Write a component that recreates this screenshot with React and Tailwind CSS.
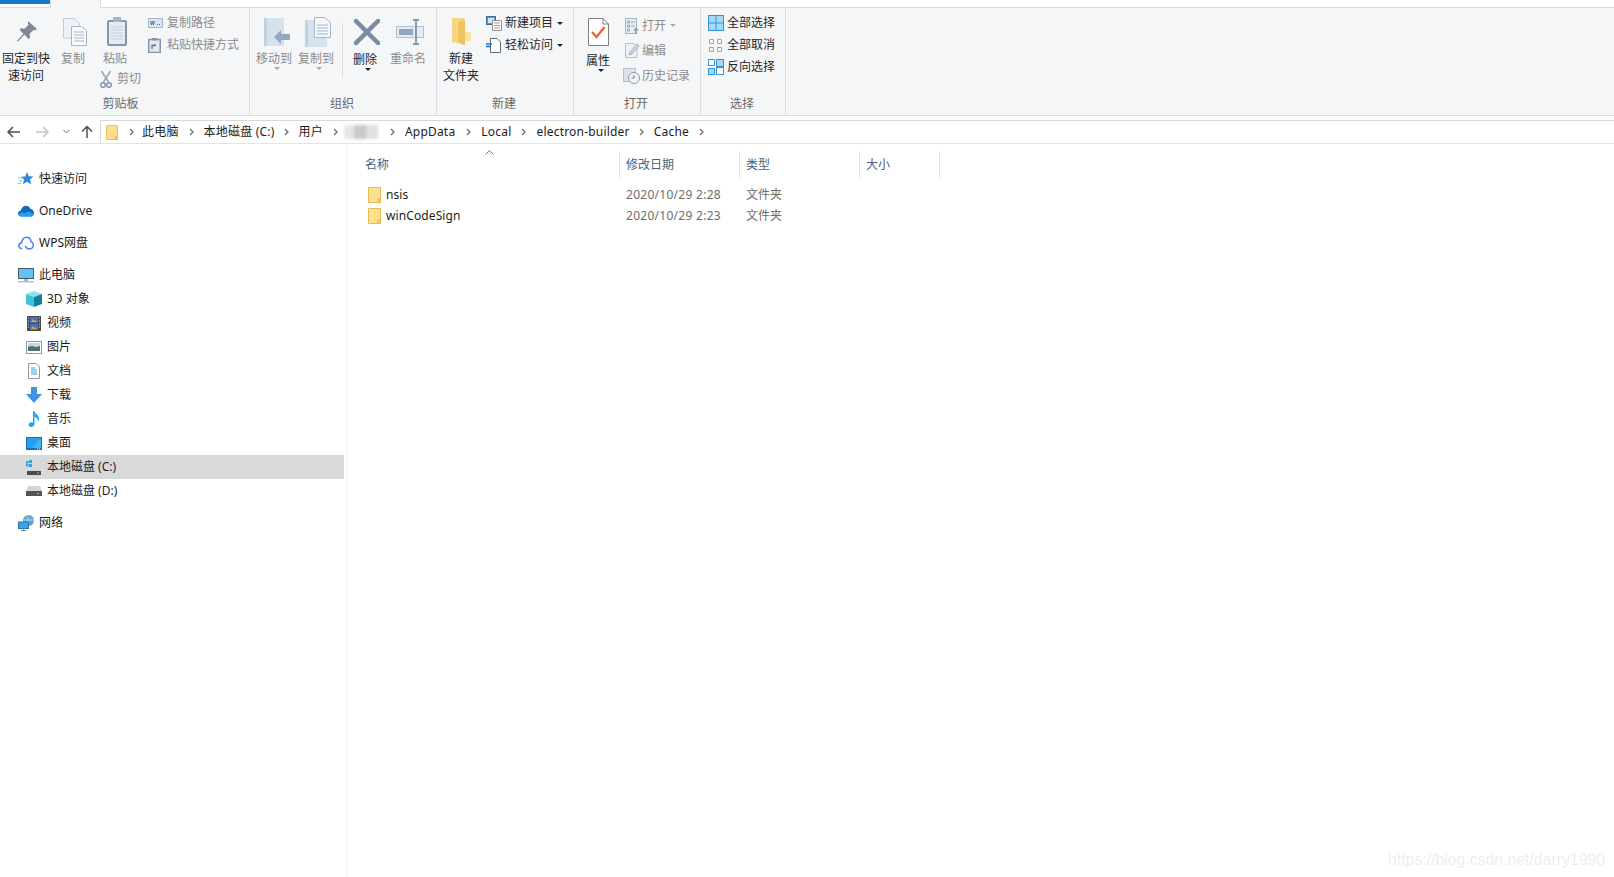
import { useState } from "react";

const navRows = [
  { label: "快速访问", icon: "star", top: true },
  { label: "OneDrive", icon: "cloud", top: true },
  { label: "WPS网盘", icon: "wps", top: true },
  { label: "此电脑", icon: "pc", top: true },
  { label: "3D 对象", icon: "cube" },
  { label: "视频", icon: "film" },
  { label: "图片", icon: "picture" },
  { label: "文档", icon: "doc" },
  { label: "下载", icon: "download" },
  { label: "音乐", icon: "music" },
  { label: "桌面", icon: "desktop" },
  { label: "本地磁盘 (C:)", icon: "diskC", selected: true },
  { label: "本地磁盘 (D:)", icon: "diskD" },
  { label: "网络", icon: "network", top: true },
];

const files = [
  { name: "nsis", date: "2020/10/29 2:28", type: "文件夹" },
  { name: "winCodeSign", date: "2020/10/29 2:23", type: "文件夹" },
];

function Folder({ w = 13, h = 16 }) {
  return (
    <svg width={w} height={h} viewBox="0 0 13 16">
      <path d="M0.5 0.5H12.5V15.5H0.5Z" fill="#fbe08f" stroke="#e4bb52" />
      <path d="M10 12V15.5H12.5V12Z" fill="#f1cc6a" stroke="#e4bb52" />
    </svg>
  );
}

function NavIcon({ name }) {
  switch (name) {
    case "star":
      return (
        <svg width="16" height="16" viewBox="0 0 16 16">
          <path d="M9 1l1.800 4.200 4.700.4-3.500 3 1 4.600L9 10.800 5 13.200l1-4.600-3-2.800 4.300-.2z" fill="#2b87d8" />
          <path d="M0 7h4M1 10h3M0 12.500h3" stroke="#7cc0f0" />
        </svg>
      );
    case "cloud":
      return (
        <svg width="16" height="12" viewBox="0 0 16 12">
          <path d="M3.500 11.500C1.200 11.500 0 10 0 8.500 0 6.800 1.300 5.600 2.800 5.500 3.500 2.500 5.800.8 8 .8c2 0 3.600 1.200 4.300 3C14.500 4 16 6 16 8c0 2-1.500 3.500-3.300 3.500z" fill="#0f6cbd" />
          <path d="M0.500 9.800C1 11 2 11.500 3.500 11.500h9.300c1.500 0 2.600-1 3-2.200C13 6.500 10 6 7 8 4.500 7 2 7.500.5 9.800z" fill="#2a9be8" />
        </svg>
      );
    case "wps":
      return (
        <svg width="16" height="14" viewBox="0 0 16 14" fill="none">
          <path d="M4 12.800C2 12.800.8 11.300.8 9.700.8 8 2.200 6.800 3.600 6.700 4.200 3.400 6.200 1.300 8.500 1.300c2.500 0 4.300 2 4.600 4.500 1.400.3 2.200 1.800 2.200 3.300 0 2-1.400 3.700-3.300 3.700H9.500L7 10" stroke="#4a86e8" strokeWidth="1.500" />
        </svg>
      );
    case "pc":
      return (
        <svg width="16" height="15" viewBox="0 0 16 15">
          <rect x="0" y="0" width="16" height="11" fill="#4a5a6a" />
          <rect x="1" y="1" width="14" height="9" fill="#62c3f5" />
          <rect x="6" y="11" width="4" height="2" fill="#a9b6c2" />
          <rect x="0" y="13" width="16" height="1.500" fill="#b7c2cc" />
        </svg>
      );
    case "cube":
      return (
        <svg width="16" height="16" viewBox="0 0 16 16">
          <path d="M8 0l8 3-8 3-8-3z" fill="#8ce2ee" />
          <path d="M0 3l8 3v10l-8-3z" fill="#3fc3da" />
          <path d="M16 3l-8 3v10l8-3z" fill="#0f7f9f" />
        </svg>
      );
    case "film":
      return (
        <svg className="ml-[1px]" width="14" height="15" viewBox="0 0 14 15">
          <rect width="14" height="15" fill="#4b4b4b" />
          <rect x="3" y="1" width="8" height="6" fill="#4a6fb5" />
          <path d="M4 6l2-3 1.500 2 1-1 1.500 2z" fill="#d9a441" />
          <rect x="3" y="8" width="8" height="6" fill="#4a6fb5" />
          <path d="M4 13l2-3 1.500 2 1-1 1.500 2z" fill="#d9a441" />
          <path d="M1 2h1M1 5h1M1 8h1M1 11h1M12 2h1M12 5h1M12 8h1M12 11h1" stroke="#ddd" />
        </svg>
      );
    case "picture":
      return (
        <svg width="16" height="13" viewBox="0 0 16 13">
          <rect x=".5" y=".5" width="15" height="12" fill="#fff" stroke="#8f9aa5" />
          <rect x="2" y="2" width="12" height="4" fill="#bfd9e8" />
          <path d="M2 6l4-1 4 1 4-1v5H2z" fill="#4e6f6b" />
        </svg>
      );
    case "doc":
      return (
        <svg className="ml-[2px]" width="12" height="16" viewBox="0 0 12 16">
          <path d="M.5.500H8l3.500 3.500v11.500H.5z" fill="#fff" stroke="#8f9aa5" />
          <path d="M3 5h4M3 7h6M3 9h6M3 11h6" stroke="#3aa3e3" />
        </svg>
      );
    case "download":
      return (
        <svg width="16" height="16" viewBox="0 0 16 16">
          <path d="M5 0h6v7h5l-8 9-8-9h5z" fill="#3f93e0" />
        </svg>
      );
    case "music":
      return (
        <svg className="ml-[2px]" width="12" height="16" viewBox="0 0 12 16">
          <path d="M5 0h1.500c.3 3 4.500 3.500 4.500 8 0 1-.3 2-.8 2.800.2-2.800-2.200-4.500-3.700-5V13c0 1.800-1.500 3-3.500 3C1.500 16 .5 15 .5 13.800.5 12.300 2 11.300 3.500 11.300c.6 0 1 .1 1.500.3z" fill="#1ea7f2" />
        </svg>
      );
    case "desktop":
      return (
        <svg width="16" height="13" viewBox="0 0 16 13">
          <rect width="16" height="13" fill="#1a6fb5" />
          <rect x="1" y="1" width="14" height="10" fill="#1fa2ee" />
          <path d="M8 9l5-7h2v9H6z" fill="#3bb4f5" />
          <path d="M11 12h1M13 12h1" stroke="#fff" />
        </svg>
      );
    case "diskC":
      return (
        <svg width="16" height="15" viewBox="0 0 16 15">
          <path d="M0 1h2.500v2.500H0zM3 0h3v3H3zM0 4h2.500v2.500H0zM3 4h3v3H3z" fill="#22a7e8" />
          <path d="M2 9h12l2 2H0z" fill="#d7d7d7" />
          <rect x="1" y="11" width="14" height="4" fill="#4a4a4a" />
          <rect x="11" y="12.500" width="2" height="1" fill="#6fdc6f" />
        </svg>
      );
    case "diskD":
      return (
        <svg width="16" height="10" viewBox="0 0 16 10">
          <path d="M2 0h12l2 5H0z" fill="#d2d6d6" />
          <rect x="0" y="5" width="16" height="5" fill="#555" />
          <rect x="11" y="7" width="2" height="1" fill="#6fdc6f" />
        </svg>
      );
    default:
      return (
        <svg width="16" height="16" viewBox="0 0 16 16">
          <circle cx="10.500" cy="5.500" r="5.500" fill="#5ea6d8" />
          <path d="M9 1c2 2 2 7 0 9M6 5h10" stroke="#b6d9ef" fill="none" />
          <rect x="0" y="6.500" width="11" height="7.500" fill="#2b78b5" />
          <rect x="1" y="7.500" width="9" height="5.500" fill="#39a5e8" />
          <path d="M3 15.500h5M5.500 14v1.500" stroke="#7c8b99" />
        </svg>
      );
  }
}

function Caret({ dark }) {
  return (
    <span
      className={`block h-0 w-0 border-x-[3.5px] border-t-[3.5px] border-x-transparent ${
        dark ? "border-t-[#222]" : "border-t-[#a8a8a8]"
      }`}
    />
  );
}

function BigButton({ icon, lines, width, disabled, caret, darkCaret, iconShift = "", labelShift = "" }) {
  return (
    <div className={`flex shrink-0 flex-col items-center pt-[5px] ${width}`}>
      <div className={`flex h-[37px] items-center justify-center ${iconShift}`}>{icon}</div>
      {lines.map((line) => (
        <span key={line} className={`h-[17px] whitespace-nowrap leading-[17px] ${labelShift} ${disabled ? "text-[#8c8c8c]" : "text-[#262626]"}`}>
          {line}
        </span>
      ))}
      {caret && (
        <div className="ml-[5px]">
          <Caret dark={darkCaret} />
        </div>
      )}
    </div>
  );
}

function SmallRow({ icon, label, disabled, caret, height = "h-[22px]", iconBox = "w-[19px]" }) {
  return (
    <div className={`flex items-center whitespace-nowrap ${height}`}>
      <span className={`flex shrink-0 items-center justify-start ${iconBox}`}>{icon}</span>
      <span className={disabled ? "text-[#8c8c8c]" : "text-[#262626]"}>{label}</span>
      {caret && (
        <span className="ml-[4px]">
          <Caret dark={caret === "dark"} />
        </span>
      )}
    </div>
  );
}

function RibbonGroup({ label, width, labelPad = "pr-[2px]", children }) {
  return (
    <div className={`flex h-full shrink-0 flex-col border-r border-[#dfe0e1] ${width}`}>
      <div className="flex min-h-0 flex-1">{children}</div>
      <div className={`flex h-[24px] items-center justify-center pt-[2px] text-[#6b6b6b] ${labelPad}`}>{label}</div>
    </div>
  );
}

function Crumb({ label }) {
  return <span className="whitespace-nowrap tracking-[0.2px] text-[#1c1c1c]">{label}</span>;
}

function Sep({ className }) {
  return (
    <svg className={`shrink-0 ${className}`} width="5" height="8" viewBox="0 0 5 8" fill="none">
      <path d="M1 1l3 3-3 3" stroke="#6e6e6e" strokeWidth="1.300" />
    </svg>
  );
}

function Ribbon() {
  return (
    <div className="flex h-[108px] border-b border-[#dadbdc] bg-[#f5f6f7] pt-0">
      <RibbonGroup label="剪贴板" width="w-[250px]" labelPad="pr-[8px]">
        <BigButton
          width="w-[52px]"
          lines={["固定到快", "速访问"]}
          icon={
            <svg width="21" height="22" viewBox="0 0 21 22">
              <path d="M12 0l9 8-2 1.500-1.500-.5-4 4 .5 3.500-1.500 1.500-4-4.500-6.500 7L1 19.800l6.500-7-4-4 1.500-1.500 3.500.5 4-4-.500-1.500z" fill="#7e8896" />
            </svg>
          }
        />
        <BigButton
          width="w-[42px]"
          disabled
          lines={["复制"]}
          iconShift="ml-[4px]"
          icon={
            <svg width="24" height="28" viewBox="0 0 24 28" fill="none">
              <path d="M.5.500h11l5 5V20H.5z" fill="#eef2f7" stroke="#bccbdc" />
              <path d="M8.500 8.500h10l5 4v15h-15z" fill="#f7f9fb" stroke="#a5b6ca" />
              <path d="M11 14h10M11 17h10M11 20h10M11 23h10" stroke="#a5b6ca" />
            </svg>
          }
        />
        <div className="flex w-[50px] shrink-0 flex-col">
          <BigButton
            width="w-[42px]"
            disabled
            lines={["粘贴"]}
            iconShift="ml-[4px]"
            icon={
              <svg width="20" height="29" viewBox="0 0 20 29" fill="none">
                <rect x="1" y="4" width="18" height="24" rx="1" fill="#e6ebf2" stroke="#8595ab" strokeWidth="2" />
                <rect x="6" y="0" width="8" height="5" fill="#a5b2c4" />
                <path d="M4 10h12M4 13h12M4 16h12M4 19h12M4 22h12" stroke="#c4cfdd" />
              </svg>
            }
          />
          <div className="mt-[3px] ml-[6px] flex h-[18px] items-center whitespace-nowrap text-[#8c8c8c]">
            <svg className="mr-[5px]" width="12" height="17" viewBox="0 0 12 17" fill="none">
              <path d="M1.500 0l7 11M10.500 0l-7 11" stroke="#9aa3ad" strokeWidth="1.500" />
              <circle cx="3" cy="14" r="2.300" stroke="#7e94b0" strokeWidth="1.500" />
              <circle cx="9" cy="14" r="2.300" stroke="#7e94b0" strokeWidth="1.500" />
            </svg>
            剪切
          </div>
        </div>
        <div className="pl-[4px] pt-[4px]">
          <SmallRow
            disabled
            label="复制路径"
            icon={
              <svg width="15" height="10" viewBox="0 0 15 10">
                <rect x=".5" y=".5" width="14" height="9" fill="#dbe5f1" stroke="#a8b8cb" />
                <path d="M2.500 3l1 4 1-4 1 4 1-4M9 6.500h1M11 6.500h1" stroke="#5e7188" fill="none" />
              </svg>
            }
          />
          <SmallRow
            disabled
            label="粘贴快捷方式"
            icon={
              <svg width="13" height="15" viewBox="0 0 13 15">
                <rect x=".75" y="1.500" width="11.500" height="13" fill="#e4e9f0" stroke="#8595ab" strokeWidth="1.500" />
                <rect x="4" y="0" width="5" height="2.500" fill="#8595ab" />
                <path d="M4 11V7.500h3.500M4.500 7.500L8 7" stroke="#5e7188" fill="none" strokeWidth="1.300" />
              </svg>
            }
          />
        </div>
      </RibbonGroup>

      <RibbonGroup label="组织" width="w-[187px]">
        <div className="w-[3px] shrink-0" />
        <BigButton
          width="w-[42px]"
          disabled
          caret
          lines={["移动到"]}
          iconShift="ml-[6px]"
          icon={
            <svg width="26" height="28" viewBox="0 0 26 28">
              <path d="M0 0h20v28H0z" fill="#d6e1ee" />
              <path d="M0 0h3v28H0z" fill="#c2d0e0" />
              <path d="M10 19l7-7v4h9v6h-9v4z" fill="#93a7be" />
            </svg>
          }
        />
        <BigButton
          width="w-[42px]"
          disabled
          caret
          lines={["复制到"]}
          iconShift="ml-[3px]"
          icon={
            <svg width="26" height="30" viewBox="0 0 26 30" fill="none">
              <path d="M0 3h22v27H0z" fill="#d6e1ee" />
              <path d="M0 3h3v27H0z" fill="#c2d0e0" />
              <path d="M9.500.500h10l6 5v15h-16z" fill="#f5f8fb" stroke="#a5b6ca" />
              <path d="M12 8h11M12 11h11M12 14h11M12 17h11" stroke="#a5b6ca" />
            </svg>
          }
        />
        <div className="mt-[15px] ml-[5px] h-[55px] w-px shrink-0 bg-[#dfe0e1]" />
        <BigButton
          width="w-[44px]"
          caret
          darkCaret
          lines={["删除"]}
          iconShift="ml-[4px]"
          labelShift="mt-[1px]"
          icon={
            <svg width="26" height="26" viewBox="0 0 26 26">
              <path d="M2 2l22 22M24 2L2 24" stroke="#7b8ba6" strokeWidth="4.500" strokeLinecap="square" />
            </svg>
          }
        />
        <BigButton
          width="w-[42px]"
          disabled
          lines={["重命名"]}
          iconShift="ml-[4px]"
          icon={
            <svg width="28" height="26" viewBox="0 0 28 26" fill="none">
              <rect x=".5" y="7.500" width="27" height="11" fill="#e3eaf3" stroke="#b3c2d3" />
              <rect x="3" y="10" width="14" height="6" fill="#93a7be" />
              <path d="M17 1h6M20 1v24M17 25h6" stroke="#8a99ab" strokeWidth="2" />
            </svg>
          }
        />
      </RibbonGroup>

      <RibbonGroup label="新建" width="w-[137px]">
        <BigButton
          width="w-[48px]"
          lines={["新建", "文件夹"]}
          icon={
            <svg width="19" height="27" viewBox="0 0 19 27">
              <path d="M0 0h12l1 2v25L0 24z" fill="#f6d67f" />
              <path d="M6 4l7-2v25l-7-3z" fill="#efc45c" />
              <path d="M13 14h6v9h-6z" fill="#f9e3a4" />
            </svg>
          }
        />
        <div className="pl-[1px] pt-[4px]">
          <SmallRow
            label="新建项目"
            caret="dark"
            icon={
              <svg width="16" height="15" viewBox="0 0 16 15" fill="none">
                <rect x=".5" y=".5" width="9" height="8" fill="#5a9bc7" stroke="#3a6f96" />
                <rect x="2" y="2" width="6" height="5" fill="#d4e6f3" />
                <path d="M6.500 4.500H15.500V14.500H6.500z" fill="#fff" stroke="#8c97a3" />
                <path d="M8 7h6M8 9.500h6M8 12h6" stroke="#e0867a" />
              </svg>
            }
          />
          <SmallRow
            label="轻松访问"
            caret="dark"
            icon={
              <svg width="15" height="15" viewBox="0 0 15 15" fill="none">
                <path d="M4.500.500H11l3.500 3.500v10.500h-10z" fill="#fff" stroke="#5f6a75" />
                <path d="M0 6h6M0 8.500h5" stroke="#1c6fb5" strokeWidth="1.300" />
              </svg>
            }
          />
        </div>
      </RibbonGroup>

      <RibbonGroup label="打开" width="w-[127px]">
        <BigButton
          width="w-[48px]"
          caret
          darkCaret
          lines={["属性"]}
          labelShift="mt-[2px]"
          icon={
            <svg width="21" height="28" viewBox="0 0 21 28" fill="none">
              <path d="M.5.500H15l5.500 5.500v21.500H.5z" fill="#fff" stroke="#7f7f7f" />
              <path d="M15 .5V6h5.500" stroke="#7f7f7f" />
              <path d="M4 14l4.500 5 8-10" stroke="#e8642c" strokeWidth="2.200" />
            </svg>
          }
        />
        <div className="pl-[3px] pt-[5px]">
          <SmallRow
            disabled
            height="h-[25px]"
            iconBox="w-[17px]"
            label="打开"
            caret="light"
            icon={
              <svg width="15" height="16" viewBox="0 0 15 16" fill="none">
                <rect x=".5" y=".5" width="11" height="15" fill="#e8edf3" stroke="#a8b4c2" />
                <path d="M2.500 3h2v2h-2zM2.500 7h2v2h-2zM2.500 11h2v2h-2zM6 4h4M6 8h4" stroke="#9aa8b8" />
                <path d="M11 9l3 3.500h-2V16h-2v-3.500H8z" fill="#8da3bd" />
              </svg>
            }
          />
          <SmallRow
            disabled
            height="h-[25px]"
            iconBox="w-[17px]"
            label="编辑"
            icon={
              <svg width="15" height="15" viewBox="0 0 15 15" fill="none">
                <path d="M.5.500H9l3 3v11H.5z" fill="#eef2f7" stroke="#b3c2d3" />
                <path d="M4 12l1-3 7-8 2 2-7 8z" fill="#c6d4e4" stroke="#a5b6ca" />
              </svg>
            }
          />
          <SmallRow
            disabled
            height="h-[25px]"
            iconBox="w-[17px]"
            label="历史记录"
            icon={
              <svg className="-ml-[2px]" width="17" height="17" viewBox="0 0 17 17" fill="none">
                <rect x=".5" y="1.500" width="12" height="13" fill="#dbe2ea" stroke="#b3c2d3" />
                <circle cx="11" cy="11" r="5.500" fill="#f2f4f7" stroke="#8d9aa8" />
                <path d="M11 8v3H8.500" stroke="#6f7e8e" />
              </svg>
            }
          />
        </div>
      </RibbonGroup>

      <RibbonGroup label="选择" width="w-[85px]">
        <div className="pl-[7px] pt-[4px]">
          <SmallRow
            label="全部选择"
            icon={
              <svg width="16" height="16" viewBox="0 0 16 16">
                <rect width="16" height="16" fill="#2c97dd" />
                <path d="M1 1h6.500v6.500H1zM8.500 1H15v6.500H8.500zM1 8.500h6.500V15H1zM8.500 8.500H15V15H8.500z" fill="#a9d6f3" />
              </svg>
            }
          />
          <SmallRow
            label="全部取消"
            icon={
              <svg width="15" height="15" viewBox="0 0 15 15" fill="none" stroke="#a5a5a5">
                <path d="M1.500 1.500h4v4h-4zM9.500 1.500h4v4h-4zM1.500 9.500h4v4h-4zM9.500 9.500h4v4h-4z" />
              </svg>
            }
          />
          <SmallRow
            label="反向选择"
            icon={
              <svg width="16" height="16" viewBox="0 0 16 16">
                <path d="M.5.500h6v6h-6zM.5 9.500h6v6h-6z" fill="#fff" stroke="#3a8fcf" />
                <rect x="8.500" y=".5" width="7" height="7" fill="#a9d6f3" stroke="#2c97dd" />
                <rect x="8.500" y="8.500" width="7" height="7" fill="#fff" stroke="#3a8fcf" />
                <rect x=".5" y="9.500" width="6" height="6" fill="#a9d6f3" stroke="#2c97dd" />
              </svg>
            }
          />
        </div>
      </RibbonGroup>
    </div>
  );
}

function AddressBar() {
  return (
    <div className="flex h-[28px] items-end border-b border-[#e4e4e4] pb-0">
      <div className="flex h-[23px] w-[100px] shrink-0 items-center pl-[7px]">
        <svg width="13" height="12" viewBox="0 0 13 12" fill="none">
          <path d="M13 6H1.500M6 1L1 6l5 5" stroke="#4f4f4f" strokeWidth="1.500" />
        </svg>
        <svg className="ml-[16px]" width="13" height="12" viewBox="0 0 13 12" fill="none">
          <path d="M0 6h11.500M7 1l5 5-5 5" stroke="#c4c4c4" strokeWidth="1.500" />
        </svg>
        <svg className="ml-[14px]" width="7" height="5" viewBox="0 0 7 5" fill="none">
          <path d="M.5 1l3 3 3-3" stroke="#6e6e6e" />
        </svg>
        <svg className="ml-[11px]" width="12" height="13" viewBox="0 0 12 13" fill="none">
          <path d="M6 13V1.500M1 6.500l5-5 5 5" stroke="#4f4f4f" strokeWidth="1.500" />
        </svg>
      </div>
      <div className="flex h-[23px] flex-1 items-center border-l border-t border-[#d9d9d9] pl-[5px]">
        <Folder w={12} h={17} />
        <Sep className="ml-[11px]" />
        <div className="ml-[8px]"><Crumb label="此电脑" /></div>
        <Sep className="ml-[10px]" />
        <div className="ml-[10px]"><Crumb label="本地磁盘 (C:)" /></div>
        <Sep className="ml-[9px]" />
        <div className="ml-[10px]"><Crumb label="用户" /></div>
        <Sep className="ml-[10px]" />
        <div className="ml-[6px] flex h-[14px] w-[34px] blur-[1.5px]">
          <div className="w-[10px] bg-[#e6e6e6]" />
          <div className="w-[12px] bg-[#c9c9c9]" />
          <div className="w-[12px] bg-[#e0e0e0]" />
        </div>
        <Sep className="ml-[12px]" />
        <div className="ml-[10px]"><Crumb label="AppData" /></div>
        <Sep className="ml-[11px]" />
        <div className="ml-[10px]"><Crumb label="Local" /></div>
        <Sep className="ml-[10px]" />
        <div className="ml-[10px]"><Crumb label="electron-builder" /></div>
        <Sep className="ml-[9px]" />
        <div className="ml-[10px]"><Crumb label="Cache" /></div>
        <Sep className="ml-[10px]" />
      </div>
    </div>
  );
}

function Sidebar() {
  return (
    <div className="h-full w-[347px] shrink-0 border-r border-[#f3f3f3] pt-[23px]">
      {navRows.map((row) => (
        <div
          key={row.label}
          className={`flex h-[24px] w-[344px] items-center ${row.top ? "pl-[18px]" : "pl-[26px]"} ${
            row.top && row.label !== "快速访问" ? "mt-[8px]" : ""
          } ${row.selected ? "bg-[#d9d9d9]" : ""}`}
        >
          <span className="flex w-[21px] shrink-0 items-center">
            <NavIcon name={row.icon} />
          </span>
          <span className="whitespace-nowrap text-[#1c1c1c]">{row.label}</span>
        </div>
      ))}
    </div>
  );
}

function FileList() {
  const [selected, setSelected] = useState(null);
  return (
    <div className="relative flex-1 pt-[7px]">
      <svg className="absolute left-[138px] top-[6px]" width="9" height="5" viewBox="0 0 9 5" fill="none">
        <path d="M.5 4.500l4-4 4 4" stroke="#7a7a7a" />
      </svg>
      <div className="grid h-[27px] grid-cols-[273px_120px_120px_80px] items-center text-[#4c607a]">
        <div className="flex h-full items-center border-r border-[#e5e5e5] pl-[18px]">名称</div>
        <div className="flex h-full items-center border-r border-[#e5e5e5] pl-[6px]">修改日期</div>
        <div className="flex h-full items-center border-r border-[#e5e5e5] pl-[6px]">类型</div>
        <div className="flex h-full items-center border-r border-[#e5e5e5] pl-[6px]">大小</div>
      </div>
      <div className="mt-[6px]">
        {files.map((f) => (
          <div
            key={f.name}
            onClick={() => setSelected(f.name)}
            className={`grid h-[21px] grid-cols-[273px_120px_120px_80px] items-center ${selected === f.name ? "bg-[#cce8ff]" : ""}`}
          >
            <div className="flex items-center pl-[21px]">
              <Folder />
              <span className="ml-[5px] tracking-[0.1px] text-[#1c1c1c]">{f.name}</span>
            </div>
            <div className="pl-[6px] tracking-[0.28px] text-[#6d6d6d]">{f.date}</div>
            <div className="pl-[6px] text-[#6d6d6d]">{f.type}</div>
            <div />
          </div>
        ))}
      </div>
    </div>
  );
}

export default function App() {
  return (
    <div className="relative h-[877px] w-full overflow-hidden bg-white font-['Noto_Sans','Noto_Sans_CJK_SC',sans-serif] text-[12px]">
      <div className="flex h-[8px] border-b border-[#dadbdc]">
        <div className="h-[4px] w-[50px] bg-[#1979ca]" />
        <div className="h-[8px] w-[51px] border-x border-[#dadbdc] bg-[#f5f6f7]" />
      </div>
      <Ribbon />
      <AddressBar />
      <div className="flex h-[733px]">
        <Sidebar />
        <FileList />
      </div>
      <div className="absolute right-[9px] bottom-[7px] font-['Liberation_Sans',sans-serif] text-[15.8px] leading-[20px] text-[#ededed] blur-[0.4px]">
        https://blog.csdn.net/darry1990
      </div>
    </div>
  );
}
